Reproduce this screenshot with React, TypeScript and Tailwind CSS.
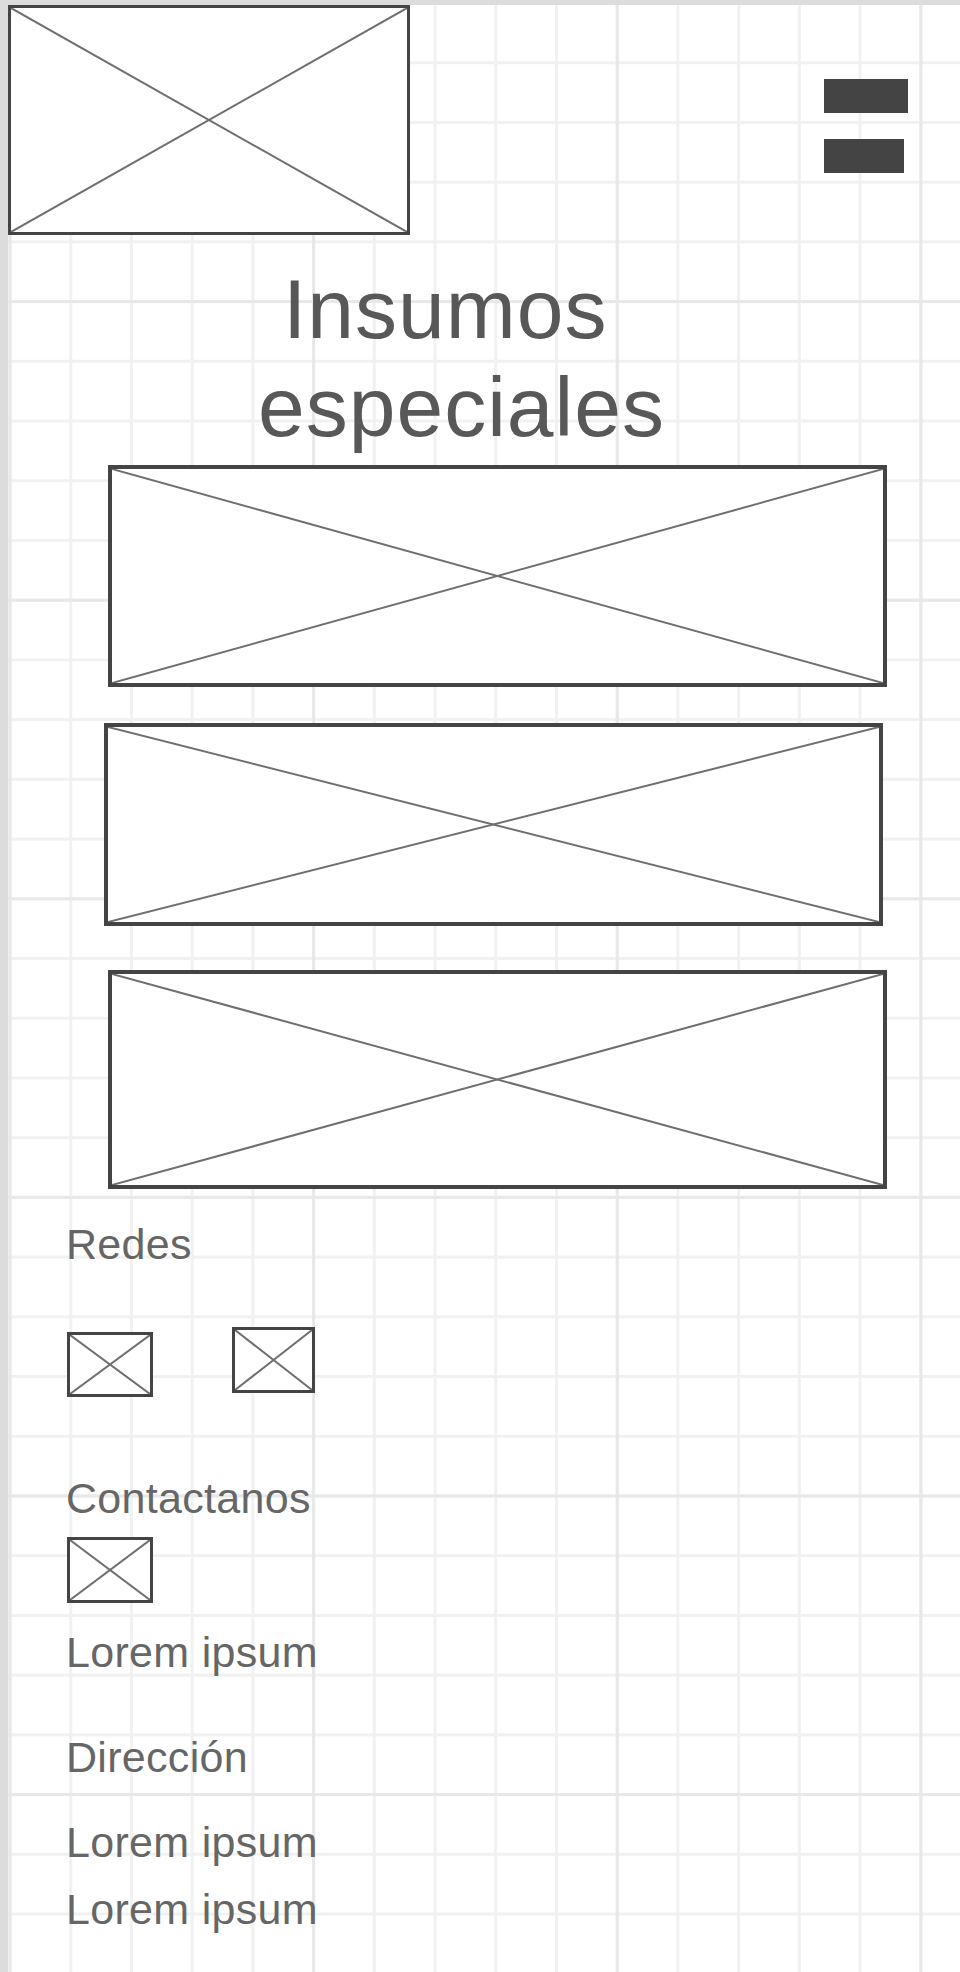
import React from "react";

function Placeholder({ className }: { className: string }) {
  return (
    <div className={`relative bg-white ${className}`}>
      <svg
        className="absolute inset-0 h-full w-full"
        viewBox="0 0 100 100"
        preserveAspectRatio="none"
      >
        <line x1="0" y1="0" x2="100" y2="100" stroke="#6f6f6f" strokeWidth="2" vectorEffect="non-scaling-stroke" />
        <line x1="100" y1="0" x2="0" y2="100" stroke="#6f6f6f" strokeWidth="2" vectorEffect="non-scaling-stroke" />
      </svg>
    </div>
  );
}

export default function App() {
  return (
    <div
      className="h-[1972px] w-[960px] overflow-hidden bg-white font-['Liberation_Sans',Arial,sans-serif] [background-image:linear-gradient(to_right,#dcdcdc_8px,transparent_8px),linear-gradient(to_bottom,#dcdcdc_5px,transparent_5px),linear-gradient(to_right,#e8e8e8_3px,transparent_3px),linear-gradient(to_bottom,#e8e8e8_3px,transparent_3px),linear-gradient(to_right,#f1f1f1_3px,transparent_3px),linear-gradient(to_bottom,#f1f1f1_3px,transparent_3px)] [background-size:100%_100%,100%_100%,303.65px_100%,100%_298.6px,60.73px_100%,100%_59.72px] [background-position:0_0,0_0,8.5px_0,0_1.5px,8.5px_0,0_1.5px]"
    >
      <header className="flex items-start justify-between pl-[8px] pr-[52px] pt-[5px]">
        <Placeholder className="h-[230px] w-[402px] border-[3px] border-[#444444]" />
        <div className="mt-[74px] flex flex-col gap-[26px]">
          <div className="h-[34px] w-[84px] bg-[#444444]" />
          <div className="h-[34px] w-[80px] bg-[#444444]" />
        </div>
      </header>

      <h1 className="mt-[25px] text-[84px] font-normal leading-[98px] tracking-[1px] text-[#585858]">
        <span className="block pl-[283px]">Insumos</span>
        <span className="block pl-[258px]">especiales</span>
      </h1>

      <section className="mt-[9px] flex flex-col">
        <Placeholder className="ml-[108px] h-[222px] w-[779px] border-4 border-[#444444]" />
        <Placeholder className="ml-[104px] mt-[36px] h-[203px] w-[779px] border-4 border-[#444444]" />
        <Placeholder className="ml-[108px] mt-[44px] h-[219px] w-[779px] border-4 border-[#444444]" />
      </section>

      <footer className="flex flex-col pl-[66px] text-[43px] leading-[48px] tracking-[0.3px] text-[#666666]">
        <p className="mt-[31px]">Redes</p>
        <div className="mt-[59px] flex items-start">
          <Placeholder className="ml-[1px] mt-[5px] h-[65px] w-[86px] border-[3px] border-[#444444]" />
          <Placeholder className="ml-[79px] h-[66px] w-[83px] border-[3px] border-[#444444]" />
        </div>
        <p className="mt-[77px]">Contactanos</p>
        <Placeholder className="ml-[1px] mt-[15px] h-[66px] w-[86px] border-[3px] border-[#444444]" />
        <p className="mt-[25px]">Lorem ipsum</p>
        <p className="mt-[57px]">Dirección</p>
        <p className="mt-[37px]">Lorem ipsum</p>
        <p className="mt-[19px]">Lorem ipsum</p>
      </footer>
    </div>
  );
}
